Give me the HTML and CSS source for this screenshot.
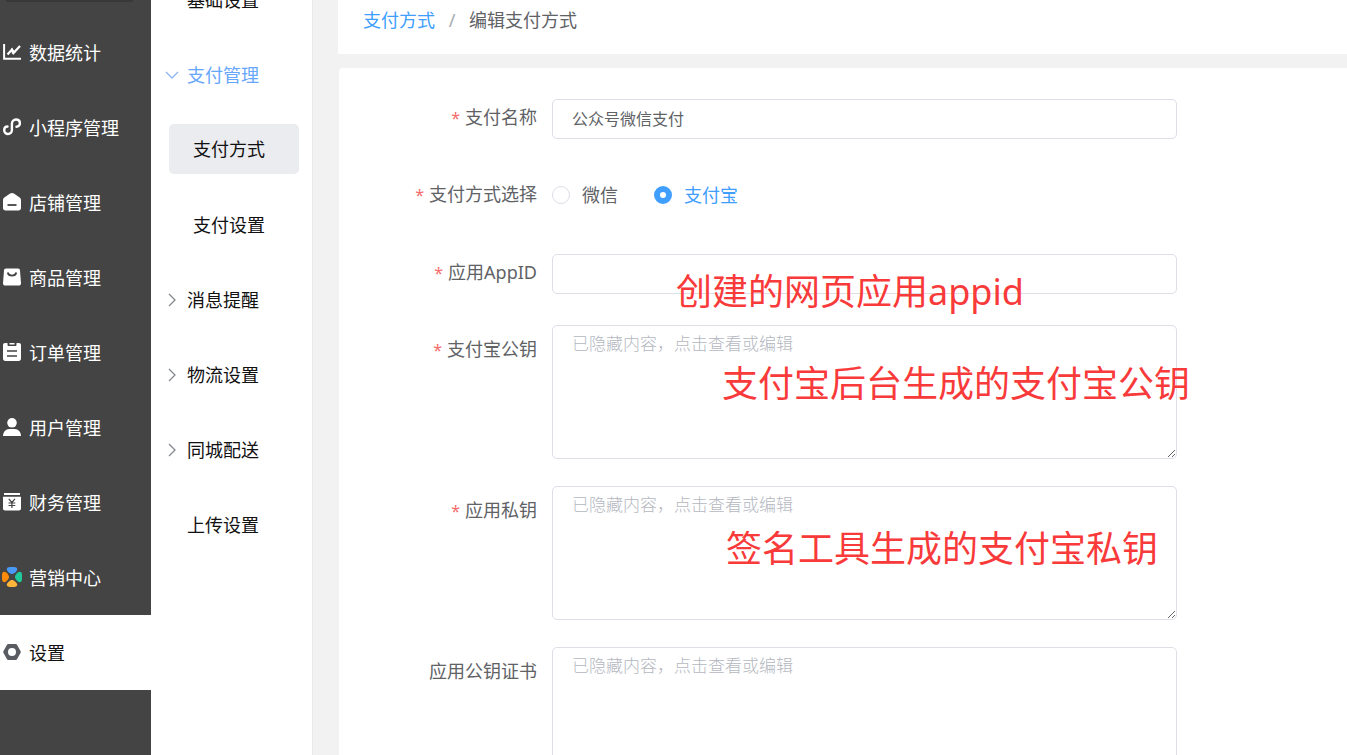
FILE: index.html
```html
<!DOCTYPE html>
<html lang="zh-CN">
<head>
<meta charset="utf-8">
<title>编辑支付方式</title>
<link rel="stylesheet" href="styles.css">
</head>
<body>
<div class="app">
  <nav class="sidebar" aria-label="主菜单">
    <div class="brand"></div>
    <a class="side-item" href="#"><svg class="icon" viewBox="0 0 18 18"><path d="M1.100 1v14.700H18" fill="none" stroke="#fff" stroke-width="2"/><path d="M4.500 11.500L9 6.500l1.500 3.500L17 3" fill="none" stroke="#fff" stroke-width="2.200"/><path d="M8 5l5 4-4 2z" fill="#fff"/></svg>数据统计</a>
    <a class="side-item" href="#"><svg class="icon" viewBox="0 0 18 18"><path d="M4.500 8.500C2.500 8.500 1.200 10 1.200 12c0 2.300 1.600 4 3.800 4s3.900-1.700 3.900-4V6c0-2.500 1.700-4.500 4.100-4.500S16.900 3 16.900 5.200c0 2-1.400 3.600-3.400 3.600" fill="none" stroke="#fff" stroke-width="2.400" stroke-linecap="round"/></svg>小程序管理</a>
    <a class="side-item" href="#"><svg class="icon" viewBox="0 0 18 18"><path d="M9 0c.7 0 1.300.2 1.900.6l5.400 3.600c1 .7 1.700 1.700 1.700 3V15c0 1.500-1 2.500-2.500 2.500h-13C1 17.500 0 16.500 0 15V7.200c0-1.300.6-2.300 1.700-3L7.100.6C7.700.2 8.300 0 9 0z" fill="#fff"/><path d="M4.500 12h9" stroke="#444" stroke-width="1.800"/></svg>店铺管理</a>
    <a class="side-item" href="#"><svg class="icon" viewBox="0 0 18 18"><path d="M3 .5h12c1.200 0 1.900.7 2 1.900l1 12.600c.1 1.400-.8 2.500-2.200 2.500H2.200C.8 17.500-.1 16.400 0 15L1 2.400C1.100 1.200 1.800.5 3 .5z" fill="#fff"/><path d="M4.700 4.500c1 4.200 7.600 4.200 8.600 0" fill="none" stroke="#444" stroke-width="1.800"/></svg>商品管理</a>
    <a class="side-item" href="#"><svg class="icon" viewBox="0 0 18 18"><path d="M2 0h2.500v1.500c0 1 .5 1.500 1.500 1.500h6c1 0 1.500-.5 1.500-1.500V0H16c1.200 0 2 .8 2 2v13.500c0 1.500-.9 2.500-2.300 2.500H2.300C.9 18 0 17 0 15.500V2C0 .8.8 0 2 0zM6.500 0h5v1.500h-5z" fill="#fff"/><path d="M4 8h10M4 13h10" stroke="#444" stroke-width="1.700"/></svg>订单管理</a>
    <a class="side-item" href="#"><svg class="icon" viewBox="0 0 18 18"><circle cx="9" cy="4.800" r="4.800" fill="#fff"/><path d="M0 18c.1-4 2.700-7 6.300-7h5.400c3.600 0 6.200 3 6.300 7z" fill="#fff"/></svg>用户管理</a>
    <a class="side-item" href="#"><svg class="icon" viewBox="0 0 18 18"><path d="M1 0h16v2H1zM0 3.800h18v11.700c0 1.300-.8 2-2 2H2c-1.200 0-2-.7-2-2z" fill="#fff"/><path d="M5.800 5.800L8.900 9.500 12 5.800M8.900 9.500v5.500M5.500 10h6.800M5.500 12.500h6.800" fill="none" stroke="#444" stroke-width="1.200"/></svg>财务管理</a>
    <a class="side-item" href="#"><svg class="icon icon-wide" viewBox="0 0 20 20"><path d="M8 0h4c2 0 3.200.9 3.200 2.200C15.200 4.200 12 7 10 7S4.800 4.200 4.800 2.200C4.800.9 6 0 8 0z" fill="#4a9af5"/><path d="M20 8v4c0 2-.9 3.200-2.200 3.200C15.800 15.200 13 12 13 10s2.800-5.200 4.800-5.200C19.100 4.800 20 6 20 8z" fill="#1fcb9b"/><path d="M12 20H8c-2 0-3.200-.9-3.200-2.200C4.800 15.800 8 13 10 13s5.200 2.800 5.200 4.800c0 1.300-1.200 2.200-3.200 2.200z" fill="#fdb53a"/><path d="M0 12V8c0-2 .9-3.200 2.200-3.200C4.200 4.800 7 8 7 10s-2.800 5.200-4.800 5.200C.9 15.200 0 14 0 12z" fill="#fb8b08"/></svg>营销中心</a>
    <a class="side-item side-item-active" href="#" aria-current="page"><svg class="icon" viewBox="0 0 18 18"><path fill-rule="evenodd" d="M5.500 1h7c.7 0 1.200.3 1.500.8l3.500 6.200c.4.700.4 1.300 0 2L14 16.200c-.3.500-.8.800-1.500.800h-7c-.7 0-1.200-.3-1.500-.8L.5 10c-.4-.7-.4-1.300 0-2L4 1.800C4.300 1.300 4.800 1 5.500 1zM9 5a4 4 0 1 0 0 8 4 4 0 0 0 0-8z" fill="#595c61"/></svg>设置</a>
  </nav>

  <nav class="submenu" aria-label="设置菜单">
    <a class="sub-item" href="#">基础设置</a>
    <a class="sub-item sub-item-open" href="#"><svg class="chevron" viewBox="0 0 12 12"><path d="M0 3l6 6 6-6"/></svg>支付管理</a>
    <a class="sub-item sub-item-child sub-item-current" href="#">支付方式</a>
    <a class="sub-item sub-item-child" href="#">支付设置</a>
    <a class="sub-item" href="#"><svg class="chevron" viewBox="0 0 12 12"><path d="M3 0l6 6-6 6"/></svg>消息提醒</a>
    <a class="sub-item" href="#"><svg class="chevron" viewBox="0 0 12 12"><path d="M3 0l6 6-6 6"/></svg>物流设置</a>
    <a class="sub-item" href="#"><svg class="chevron" viewBox="0 0 12 12"><path d="M3 0l6 6-6 6"/></svg>同城配送</a>
    <a class="sub-item" href="#">上传设置</a>
  </nav>

  <main class="main">
    <header class="breadcrumb">
      <a class="crumb-link" href="#">支付方式</a>
      <span class="crumb-sep">/</span>
      <span>编辑支付方式</span>
    </header>

    <form class="card">
      <div class="group">
        <div class="row">
          <label class="label required" for="name">支付名称</label>
          <div class="field"><input class="input" id="name" type="text" value="公众号微信支付"></div>
        </div>
        <div class="row" role="radiogroup" aria-labelledby="method-label">
          <span class="label required" id="method-label">支付方式选择</span>
          <div class="field radios">
            <label class="radio"><input class="radio-input" type="radio" name="method"><span>微信</span></label>
            <label class="radio"><input class="radio-input" type="radio" name="method" checked><span class="radio-text">支付宝</span></label>
          </div>
        </div>
        <div class="row">
          <label class="label required" for="appid">应用AppID</label>
          <div class="field">
            <input class="input" id="appid" type="text">
            <span class="note note-appid">创建的网页应用appid</span>
          </div>
        </div>
      </div>
      <div class="group group-areas">
        <div class="row">
          <label class="label label-area required" for="alipay-key">支付宝公钥</label>
          <div class="field">
            <textarea class="input area" id="alipay-key" placeholder="已隐藏内容，点击查看或编辑"></textarea>
            <span class="note note-public">支付宝后台生成的支付宝公钥</span>
          </div>
        </div>
        <div class="row">
          <label class="label label-area required" for="private-key">应用私钥</label>
          <div class="field">
            <textarea class="input area" id="private-key" placeholder="已隐藏内容，点击查看或编辑"></textarea>
            <span class="note note-private">签名工具生成的支付宝私钥</span>
          </div>
        </div>
        <div class="row">
          <label class="label label-area" for="app-cert">应用公钥证书</label>
          <div class="field"><textarea class="input area" id="app-cert" placeholder="已隐藏内容，点击查看或编辑"></textarea></div>
        </div>
      </div>
    </form>
  </main>
</div>
</body>
</html>
```

FILE: styles.css
```css
* {
  box-sizing: border-box;
}

body {
  margin: 0;
  background: #f2f2f2;
  color: #606266;
  font-family: "Noto Sans", "Noto Sans CJK SC", sans-serif;
  font-size: 18px;
  line-height: 24px;
}

a {
  color: inherit;
  text-decoration: none;
}

.app {
  display: flex;
  height: 100vh;
  overflow: hidden;
}

/* Main menu */
.sidebar {
  flex: none;
  width: 151px;
  background: #444;
  color: #fff;
}

.brand {
  height: 2px;
  margin: 0 18px 13px 6px;
  border-radius: 0 0 4px 4px;
  background: #383838;
}

.side-item {
  display: flex;
  align-items: center;
  gap: 8px;
  height: 75px;
  padding-left: 3px;
}

.side-item-active {
  background: #fff;
  color: #111;
}

.icon {
  flex: none;
  width: 18px;
  height: 18px;
  margin-bottom: 2px;
}

.icon-wide {
  width: 20px;
  height: 20px;
  margin: 0 -1px 2px;
}

/* Settings menu */
.submenu {
  flex: none;
  width: 162px;
  margin-top: -38px;
  background: #fff;
  border-right: 1px solid #e8e8e8;
  color: #111;
}

.sub-item {
  display: flex;
  align-items: center;
  height: 75px;
  padding-left: 36px;
}

.sub-item-open {
  color: #66a6fb;
}

.sub-item-child {
  padding-left: 24px;
  margin: 0 13px 0 18px;
}

.sub-item-current {
  height: 50px;
  margin-top: 12px;
  margin-bottom: 13px;
  border-radius: 5px;
  background: #eaecef;
}

.chevron {
  width: 12px;
  height: 12px;
  margin: 0 9px 0 -21px;
  fill: none;
  stroke: #85888e;
  stroke-width: 1.3;
  overflow: visible;
}

.sub-item-open .chevron {
  stroke: #8fb5f0;
}

/* Content */
.main {
  flex: 1;
  min-width: 0;
  padding-left: 25px;
}

.breadcrumb {
  display: flex;
  padding: 8px 25px 22px;
  background: #fff;
}

.crumb-link {
  color: #409eff;
}

.crumb-sep {
  width: 34px;
  text-align: center;
  color: #a8abb2;
}

.card {
  display: flex;
  flex-direction: column;
  gap: 31px;
  margin: 14px 0 0 1px;
  padding: 31px 170px 31px 0;
  border-radius: 4px 0 0 0;
  background: #fff;
}

.group {
  display: flex;
  flex-direction: column;
  gap: 37px;
}

.group-areas {
  gap: 27px;
}

.row {
  display: grid;
  grid-template-columns: 198px 1fr;
  column-gap: 15px;
}

.label {
  padding-top: 6px;
  text-align: right;
}

.label-area {
  padding-top: 12px;
}

.required::before {
  content: "*";
  margin-right: 5px;
  color: #f56c6c;
  font-size: 16px;
}

.field {
  position: relative;
}

.input {
  display: block;
  width: 100%;
  height: 40px;
  padding: 0 19px 3px;
  border: 1px solid #dcdfe6;
  border-radius: 5px;
  outline: none;
  background: #fff;
  color: #606266;
  font-family: inherit;
  font-size: 16px;
}

.area {
  height: 134px;
  padding: 6px 19px;
  font-size: 17px;
  line-height: 24px;
  resize: vertical;
}

.area::placeholder {
  color: #b4b8bf;
  font-weight: 300;
}

.radios {
  display: flex;
  align-items: center;
  gap: 36px;
  padding: 7px 0 10px;
}

.radio {
  display: flex;
  align-items: center;
  gap: 12px;
}

.radio-input {
  appearance: none;
  width: 18px;
  height: 18px;
  margin: 0;
  border: 1px solid #dcdfe6;
  border-radius: 50%;
  background: #fff;
}

.radio-input:checked {
  border: 6px solid #409eff;
}

.radio-input:checked + .radio-text {
  color: #409eff;
}

/* Notes lying over the fields */
.note {
  position: absolute;
  color: #f93a3a;
  font-size: 36px;
  line-height: 44px;
  white-space: nowrap;
  pointer-events: none;
}

.note-appid {
  left: 124px;
  top: 16px;
}

.note-public {
  left: 170px;
  top: 37px;
}

.note-private {
  left: 174px;
  top: 41px;
}
```
